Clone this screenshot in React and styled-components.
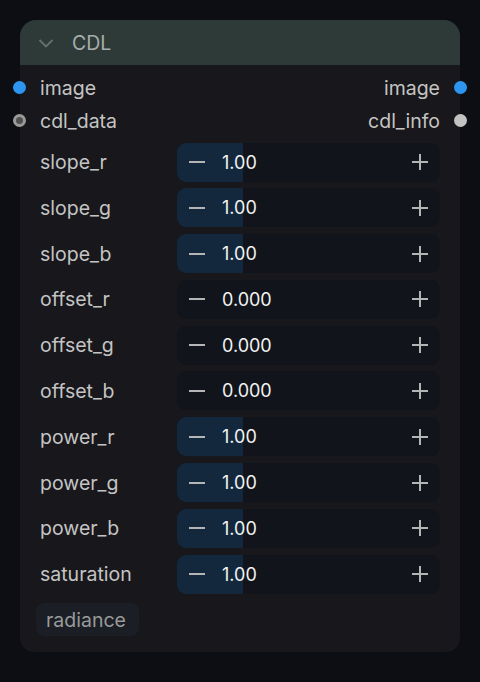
import React from "react";
import styled, { createGlobalStyle } from "styled-components";

const Global = createGlobalStyle`
  html, body { margin: 0; padding: 0; background: #0c0e13; }
  body { font-family: Inter, "Noto Sans", sans-serif; }
  #root { width: 480px; height: 682px; }
`;

const Page = styled.div`
  width: 480px;
  height: 682px;
  box-sizing: border-box;
  padding: 20px 20px 0 20px;
  background: #0c0e13;
`;

const Card = styled.div`
  width: 440px;
  height: 632px;
  background: #18171b;
  border-radius: 16px 16px 14px 14px;
  display: flex;
  flex-direction: column;
  position: relative;
`;

const Header = styled.div`
  height: 45px;
  flex: 0 0 45px;
  background: #2e3a38;
  border-radius: 16px 16px 0 0;
  display: flex;
  align-items: center;
  padding-left: 18px;
  gap: 18px;
  color: #a6aeac;
  font-size: 19.5px;
`;

const Body = styled.div`
  display: flex;
  flex-direction: column;
  padding: 6px 0 16px 0;
`;

const PortRow = styled.div`
  height: 33px;
  display: flex;
  align-items: center;
  justify-content: space-between;
  position: relative;
  padding: 0 20px;
  color: #c4c4c4;
  font-size: 19.5px;
`;

const Dot = styled.span`
  position: absolute;
  top: 50%;
  ${(p) => (p.$side === "left" ? "left: -7px;" : "right: -7px;")}
  width: 13px;
  height: 13px;
  margin-top: -6.5px;
  border-radius: 50%;
  background: ${(p) => p.$color};
  box-sizing: border-box;
  ${(p) => (p.$ring ? "border: 3.5px solid #9a9a9a; background: #505050;" : "")}
`;

const Params = styled.div`
  display: flex;
  flex-direction: column;
  gap: 5.8px;
  margin-top: 5px;
`;

const ParamRow = styled.div`
  height: 40px;
  display: flex;
  align-items: center;
  padding: 0 20px;
`;

const Label = styled.div`
  width: 137px;
  color: #c4c4c4;
  font-size: 19.5px;
`;

const Slider = styled.div`
  flex: 1;
  height: 39px;
  border-radius: 9px;
  background: #11141a;
  position: relative;
  overflow: hidden;
  display: flex;
  align-items: center;
`;

const Fill = styled.div`
  position: absolute;
  left: 0;
  top: 0;
  bottom: 0;
  background: #13283d;
`;

const Btn = styled.span`
  position: relative;
  width: 40px;
  display: flex;
  justify-content: center;
  align-items: center;
  color: #b5b5b5;
`;

const Value = styled.span`
  position: relative;
  flex: 1;
  color: #f2f2f2;
  font-size: 18px;
  padding-left: 5px;
`;

const Chip = styled.div`
  align-self: flex-start;
  margin: 9px 0 0 16px;
  height: 33px;
  padding: 0 13px 0 10px;
  border-radius: 8px;
  background: #1b1e25;
  color: #9a9a9a;
  font-size: 19.5px;
  display: flex;
  align-items: center;
`;

const Minus = () => (
  <svg width="18" height="18" viewBox="0 0 18 18">
    <path d="M1 9h16" stroke="#b5b5b5" strokeWidth="2" />
  </svg>
);
const Plus = () => (
  <svg width="18" height="18" viewBox="0 0 18 18">
    <path d="M1 9h16M9 1v16" stroke="#b5b5b5" strokeWidth="2" />
  </svg>
);
const Chevron = () => (
  <svg width="16" height="10" viewBox="0 0 16 10">
    <path d="M1.5 2l6.5 6.5 6.5-6.5" stroke="#65716f" strokeWidth="1.8" fill="none" />
  </svg>
);

const params = [
  ["slope_r", "1.00", 0.25],
  ["slope_g", "1.00", 0.25],
  ["slope_b", "1.00", 0.25],
  ["offset_r", "0.000", 0],
  ["offset_g", "0.000", 0],
  ["offset_b", "0.000", 0],
  ["power_r", "1.00", 0.25],
  ["power_g", "1.00", 0.25],
  ["power_b", "1.00", 0.25],
  ["saturation", "1.00", 0.25],
];

export default function App() {
  return (
    <>
      <Global />
      <Page>
        <Card>
          <Header>
            <Chevron />
            <span>CDL</span>
          </Header>
          <Body>
            <PortRow>
              <Dot $side="left" $color="#2d95f0" />
              <span>image</span>
              <span>image</span>
              <Dot $side="right" $color="#2d95f0" />
            </PortRow>
            <PortRow>
              <Dot $side="left" $ring />
              <span>cdl_data</span>
              <span>cdl_info</span>
              <Dot $side="right" $color="#c2c2c2" />
            </PortRow>
            <Params>
              {params.map(([name, val, frac]) => (
                <ParamRow key={name}>
                  <Label>{name}</Label>
                  <Slider>
                    <Fill style={{ width: `${frac * 100}%` }} />
                    <Btn>
                      <Minus />
                    </Btn>
                    <Value>{val}</Value>
                    <Btn>
                      <Plus />
                    </Btn>
                  </Slider>
                </ParamRow>
              ))}
            </Params>
            <Chip>radiance</Chip>
          </Body>
        </Card>
      </Page>
    </>
  );
}
